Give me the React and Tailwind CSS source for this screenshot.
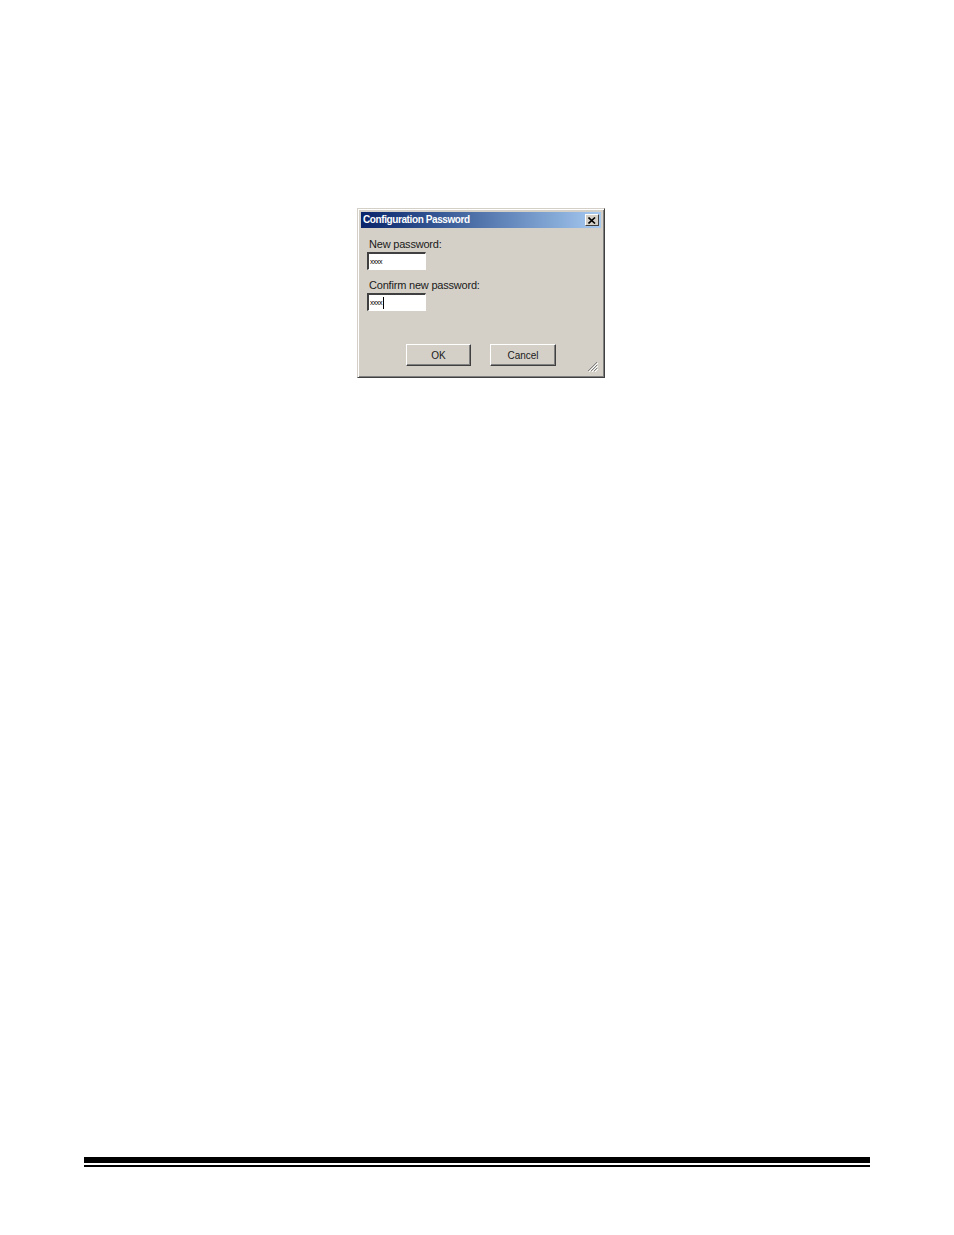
import React from "react";

const font = { fontFamily: '"Liberation Sans", Arial, sans-serif' };

const Field = ({ label, cursor }) => (
  <div className="flex flex-col">
    <span className="text-[11px] leading-[13px] text-[#1a1a1a] tracking-[-0.2px]">{label}</span>
    <div className="mt-[1px] ml-[-2px] w-[59px] h-[18px] bg-white border-t-[2px] border-l-[2px] border-t-[#404040] border-l-[#404040] border-b border-r border-b-[#ffffff] border-r-[#ffffff] outline outline-1 outline-[#d4d0c8] shadow-[1px_1px_0_#d4d0c8,-1px_-1px_0_#808080] flex items-center pl-[1px]">
      <span className="text-[7px] leading-none text-black tracking-[-0.5px]">xxxx</span>
      {cursor && <span className="w-px h-[12px] bg-black ml-[1px]" />}
    </div>
  </div>
);

const WinButton = ({ children, w }) => (
  <button className={`${w} h-[22px] bg-[#d4d0c8] text-[10px] text-[#1a1a1a] border border-t-white border-l-white border-b-[#404040] border-r-[#404040] shadow-[inset_-1px_-1px_0_#808080]`}>
    {children}
  </button>
);

export default function App() {
  return (
    <div className="w-[954px] h-[1235px] bg-white flex flex-col" style={font}>
      <div className="mt-[208px] ml-[357px] w-[248px] h-[170px] bg-[#d4d0c8] border border-t-[#d4d0c8] border-l-[#d4d0c8] border-b-[#404040] border-r-[#404040] shadow-[inset_1px_1px_0_#fff,inset_-1px_-1px_0_#808080] p-[3px] flex flex-col">
        <div className="h-[16px] flex items-center justify-between bg-gradient-to-r from-[#0a246a] to-[#a6caf0] pl-[2px] pr-[2px]">
          <span className="text-white text-[10px] font-bold tracking-[-0.4px] leading-none">Configuration Password</span>
          <div className="w-[14px] h-[12px] bg-[#d4d0c8] border border-t-white border-l-white border-b-[#404040] border-r-[#404040] flex items-center justify-center">
            <svg width="8" height="7" viewBox="0 0 8 7">
              <path d="M0.5 0.5 L7 6.5 M7 0.5 L0.5 6.5" stroke="#000" strokeWidth="1.6" />
            </svg>
          </div>
        </div>
        <div className="flex flex-col gap-[9px] pl-[8px] pt-[10px]">
          <Field label="New password:" />
          <Field label="Confirm new password:" cursor />
        </div>
        <div className="flex-1 flex items-end justify-between pl-[45px] pr-[3px] pb-[7px]">
          <div className="flex gap-[19px] mb-[1px]">
            <WinButton w="w-[65px]">OK</WinButton>
            <WinButton w="w-[66px]">Cancel</WinButton>
          </div>
          <svg width="11" height="11" viewBox="0 0 11 11" className="mb-[-5px]">
            <path d="M10 1 L1 10 M10 4 L4 10 M10 7 L7 10" stroke="#808080" strokeWidth="1" />
            <path d="M11 2 L2 11 M11 5 L5 11 M11 8 L8 11" stroke="#fff" strokeWidth="1" />
          </svg>
        </div>
      </div>
      <div className="mt-[779px] ml-[84px] w-[786px] flex flex-col">
        <div className="h-[6px] bg-black" />
        <div className="h-[2px] mt-[2px] bg-black" />
      </div>
    </div>
  );
}
